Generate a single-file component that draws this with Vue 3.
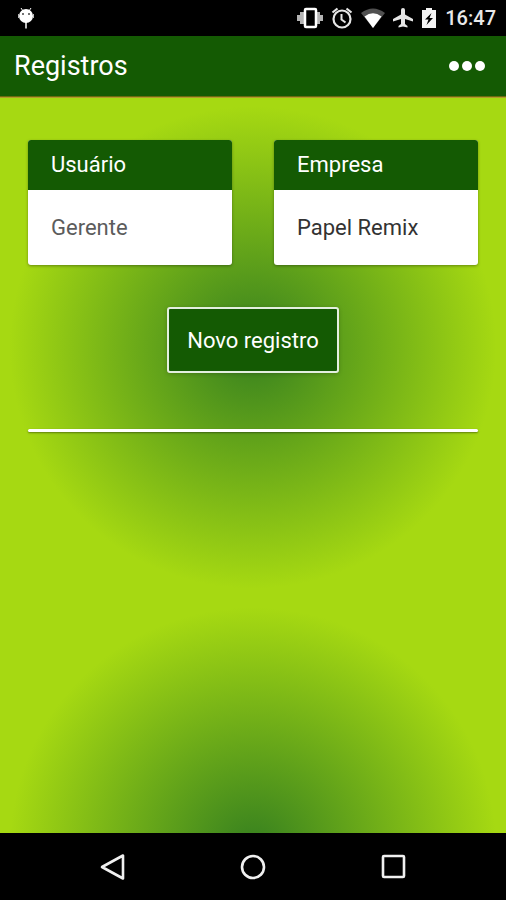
<script setup>
const cards = [
  { title: 'Usuário', value: 'Gerente', muted: true },
  { title: 'Empresa', value: 'Papel Remix', muted: false },
]
</script>

<template>
  <div class="screen">
    <div class="status">
      <svg width="16" height="22" viewBox="0 0 16 22" aria-hidden="true">
        <path d="M3 1l2 3M13 1l-2 3" stroke="#fff" stroke-width="1" />
        <circle cx="8" cy="9" r="7" fill="#fff" />
        <path d="M0.500 7v4M15.500 7v4" stroke="#bbb" stroke-width="1" />
        <path d="M8 15v6.500" stroke="#fff" stroke-width="1.5" />
        <circle cx="5" cy="7" r="1" fill="#444" />
        <circle cx="11" cy="7" r="1" fill="#444" />
      </svg>
      <div class="indicators">
        <svg width="26" height="22" viewBox="0 0 26 22" aria-hidden="true">
          <path d="M0 8h3V5h4v12H3v-3H0zM26 8h-3V5h-4v12h4v-3h3z" fill="#b4b4b4" />
          <rect x="8" y="2" width="11" height="18" rx="1" fill="#000" stroke="#fff" stroke-width="2.5" />
        </svg>
        <svg width="22" height="22" viewBox="0 0 22 22" fill="none" stroke="#e6e6e6" aria-hidden="true">
          <circle cx="11" cy="12" r="8.500" stroke-width="2.2" />
          <path d="M1.500 5.500l5-4M20.500 5.500l-5-4" stroke-width="2.2" />
          <path d="M10.500 7v5.500l4 3" stroke-width="2" />
        </svg>
        <svg width="24" height="22" viewBox="0 0 24 22" aria-hidden="true">
          <path d="M0 6Q12-3 24 6L12 21z" fill="#505050" />
          <path d="M3.500 9.500q8.500-6.500 17 0L12 21z" fill="#fff" />
        </svg>
        <svg width="20" height="22" viewBox="0 0 20 22" aria-hidden="true">
          <path d="M20 14.500v-2.500L12 7.500V3q0-2-2-2T8 3v4.500L0 12v2.500L8 12v5l-2.500 2v1.500L10 19.500l4.500 1V19L12 17v-5z" fill="#e6e6e6" />
        </svg>
        <svg width="16" height="22" viewBox="0 0 16 22" aria-hidden="true">
          <path d="M1 3h4V1h6v2h4v18H1z" fill="#f4f4f4" />
          <path d="M10.500 6L4 12.500h3.500L5.500 18l6.500-7H8.500z" fill="#000" />
        </svg>
        <span class="clock">16:47</span>
      </div>
    </div>

    <header class="toolbar">
      <h1>Registros</h1>
      <button class="more" type="button" aria-label="Menu">
        <i></i><i></i><i></i>
      </button>
    </header>

    <main class="content">
      <div class="cards">
        <section v-for="card in cards" :key="card.title" class="card">
          <h2>{{ card.title }}</h2>
          <p :class="{ muted: card.muted }">{{ card.value }}</p>
        </section>
      </div>
      <button class="primary" type="button">Novo registro</button>
      <hr />
    </main>

    <nav class="navbar">
      <button type="button" aria-label="Voltar">
        <svg width="28" height="28" viewBox="0 0 28 28"><path d="M24 2.500v23L3 14z" /></svg>
      </button>
      <button type="button" aria-label="Início">
        <svg width="28" height="28" viewBox="0 0 28 28"><circle cx="14" cy="14" r="11" /></svg>
      </button>
      <button type="button" aria-label="Recentes">
        <svg width="28" height="28" viewBox="0 0 28 28"><rect x="4" y="3" width="21" height="21" rx="1" /></svg>
      </button>
    </nav>
  </div>
</template>

<style>
body {
  margin: 0;
  background: #000;
}
</style>

<style scoped>
.screen {
  display: flex;
  flex-direction: column;
  min-height: 100vh;
  font-family: Roboto, "Liberation Sans", sans-serif;
}
.status {
  display: flex;
  align-items: center;
  justify-content: space-between;
  height: 36px;
  padding: 0 10px 0 18px;
  background: #000;
}
.indicators {
  display: flex;
  align-items: center;
  gap: 8px;
}
.clock {
  color: #e8e8e8;
  font-size: 20px;
  font-weight: 500;
  line-height: 24px;
}
.toolbar {
  position: relative;
  display: flex;
  align-items: center;
  justify-content: space-between;
  height: 60px;
  padding: 0 21px 0 14px;
  background: #145a03;
  border-bottom: 1px solid #6c6a0e;
  box-shadow: 0 1px #b39c2c;
}
h1 {
  margin: 0;
  color: #fff;
  font-size: 27px;
  font-weight: 400;
  line-height: 32px;
}
button {
  font-family: inherit;
  cursor: pointer;
}
.more {
  display: flex;
  gap: 3px;
  padding: 8px 0;
  border: 0;
  background: none;
}
.more i {
  width: 10px;
  height: 10px;
  border-radius: 50%;
  background: #fff;
}
.content {
  display: flex;
  flex: 1;
  flex-direction: column;
  align-items: center;
  padding: 43px 28px;
  background: radial-gradient(#36801f, #a6d912 68%) 0 0 / 100% 501px;
}
.cards {
  display: grid;
  grid-template-columns: 1fr 1fr;
  gap: 42px;
  width: 100%;
}
.card {
  overflow: hidden;
  border-radius: 3px;
  background: #fff;
  box-shadow: 0 1px 3px rgba(0, 0, 0, 0.35);
}
h2 {
  margin: 0;
  padding: 0 23px;
  background: #145a03;
  color: #fff;
  font-size: 22px;
  font-weight: 400;
  line-height: 50px;
}
.card p {
  margin: 0;
  padding: 0 23px;
  color: #333;
  font-size: 22px;
  line-height: 75px;
}
.card .muted {
  color: #5c5c5c;
}
.primary {
  height: 66px;
  margin-top: 42px;
  padding: 0 18px;
  border: 2px solid #e4efe0;
  border-radius: 3px;
  background: #145a03;
  box-shadow: 0 1px 4px rgba(0, 0, 0, 0.2);
  color: #fff;
  font-size: 22px;
}
hr {
  width: 100%;
  height: 3px;
  margin: 56px 0 0;
  border: 0;
  border-radius: 2px;
  background: #fff;
  box-shadow: 0 1px 2px rgba(0, 0, 0, 0.4);
}
.navbar {
  display: flex;
  align-items: center;
  justify-content: center;
  gap: 112px;
  height: 67px;
  background: #000;
}
.navbar button {
  display: flex;
  padding: 0;
  border: 0;
  background: none;
}
.navbar svg {
  fill: none;
  stroke: #f0f0f0;
  stroke-width: 2.6;
  stroke-linejoin: round;
}
</style>
